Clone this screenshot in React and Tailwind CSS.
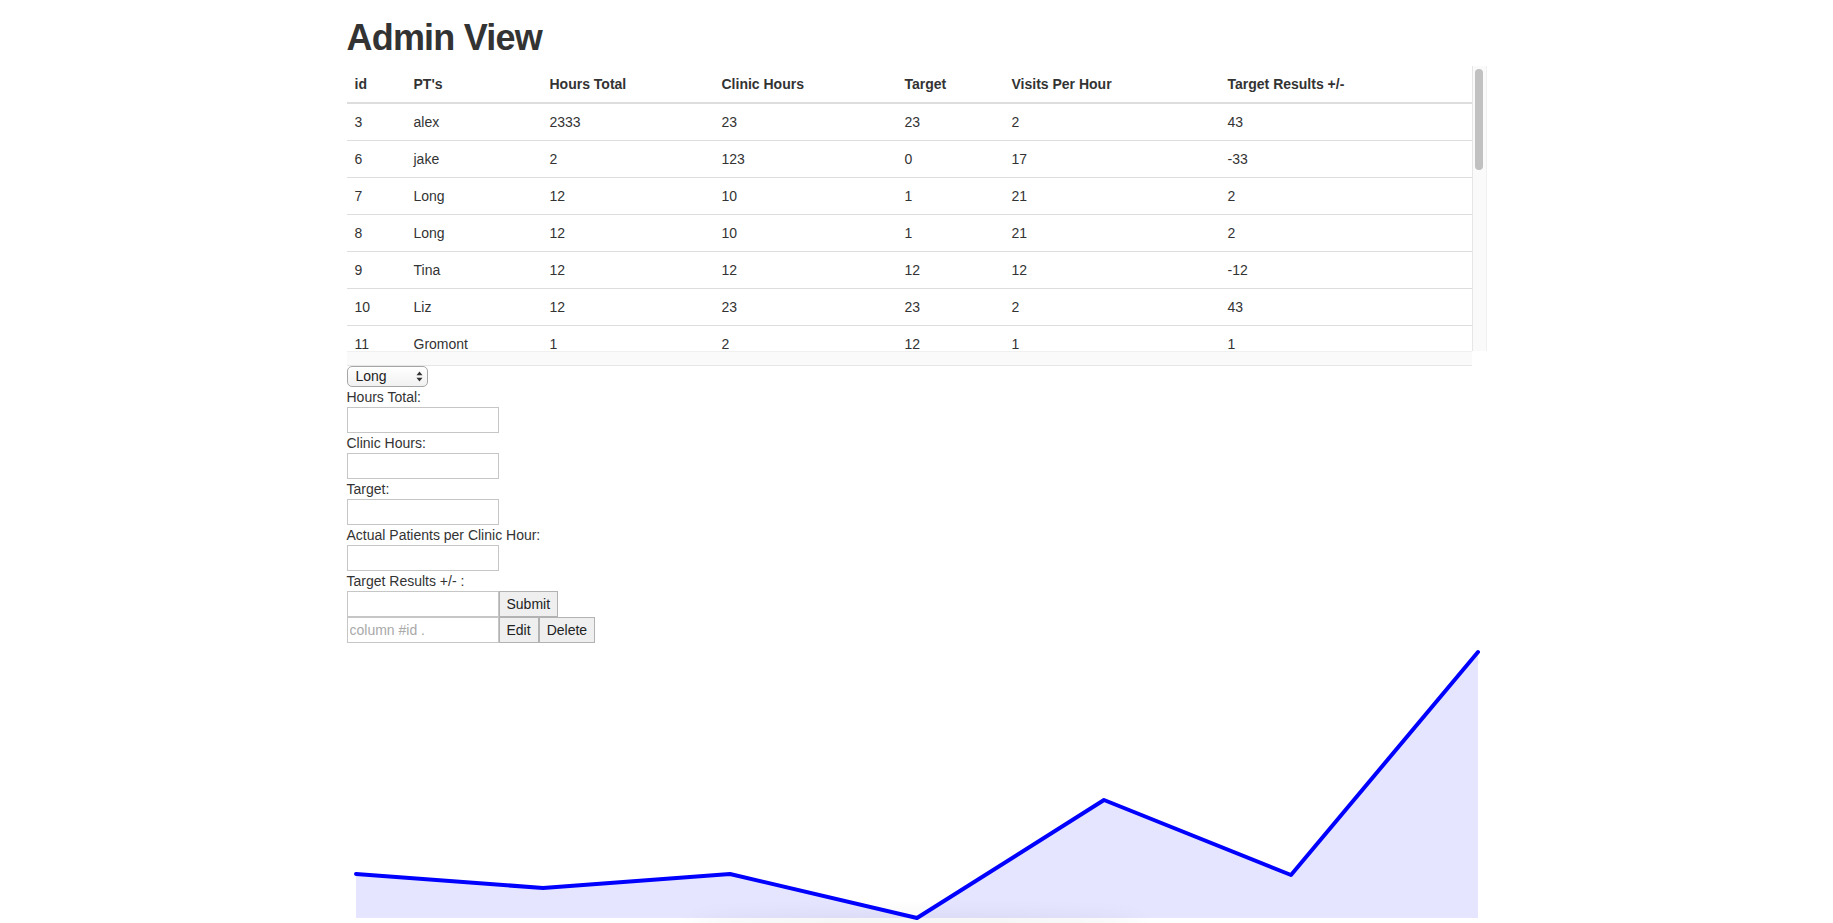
import React from "react";

const rows = [
  [3, "alex", 2333, 23, 23, 2, 43],
  [6, "jake", 2, 123, 0, 17, -33],
  [7, "Long", 12, 10, 1, 21, 2],
  [8, "Long", 12, 10, 1, 21, 2],
  [9, "Tina", 12, 12, 12, 12, -12],
  [10, "Liz", 12, 23, 23, 2, 43],
  [11, "Gromont", 1, 2, 12, 1, 1],
];

const headers = ["id", "PT's", "Hours Total", "Clinic Hours", "Target", "Visits Per Hour", "Target Results +/-"];
const colWidths = ["w-[59px]", "w-[136px]", "w-[172px]", "w-[183px]", "w-[107px]", "w-[216px]", "w-[252px]"];

const points = [
  [9, 231],
  [196, 245],
  [383, 231],
  [570, 275],
  [757, 157],
  [944, 232],
  [1131, 9],
];

const inputCls =
  "w-[152px] h-[26px] border border-[#c6c6c6] bg-white px-[2px] py-[2px] text-[14px] leading-[20px] text-[#333] outline-none placeholder:text-[#a9a9a9]";
const btnCls =
  "h-[26px] border border-[#b2b2b2] bg-[#efefef] px-[7px] text-[14px] leading-[20px] text-[#222]";

function Field({ label }) {
  return (
    <>
      <label className="block h-[20px]">{label}</label>
      <input type="text" className={inputCls} />
    </>
  );
}

function Chart() {
  const line = points.map((p) => p.join(",")).join(" ");
  const area = `9,275 ${line} 1131,275`;
  return (
    <svg width="1140" height="285" className="block" viewBox="0 0 1140 285">
      <defs>
        <filter id="blur" x="-50%" y="-200%" width="200%" height="500%">
          <feGaussianBlur stdDeviation="10" />
        </filter>
      </defs>
      <polygon points={area} fill="#0000ff" fillOpacity="0.1" />
      <ellipse cx="570" cy="280" rx="230" ry="7" fill="#000" opacity="0.07" filter="url(#blur)" />
      <polyline points={line} fill="none" stroke="#0000ff" strokeWidth="4" strokeLinejoin="round" strokeLinecap="round" />
    </svg>
  );
}

export default function App() {
  return (
    <div className="min-h-screen bg-white font-['Liberation_Sans',Arial,sans-serif] text-[14px] leading-[20px] text-[#333]">
      <div className="mx-auto w-[1140px]">
        <h1 className="mt-[18px] mb-[8px] text-[36px] leading-[40px] font-bold tracking-[-0.8px] text-[#333]">Admin View</h1>

        {/* Table scroll box, scrollbars drawn by hand */}
        <div className="flex h-[300px] w-[1140px] flex-col">
          <div className="flex h-[285px]">
            <div className="w-[1125px] overflow-hidden">
              <table className="w-full table-fixed">
                <colgroup>
                  {colWidths.map((w, i) => (
                    <col key={i} className={w} />
                  ))}
                </colgroup>
                <thead>
                  <tr>
                    {headers.map((h) => (
                      <th key={h} className="border-b-2 border-[#ddd] p-[8px] text-left align-bottom font-bold">
                        {h}
                      </th>
                    ))}
                  </tr>
                </thead>
                <tbody>
                  {rows.map((r) => (
                    <tr key={r[0]}>
                      {r.map((c, i) => (
                        <td key={i} className="border-t border-[#ddd] p-[8px] align-top">
                          {c}
                        </td>
                      ))}
                    </tr>
                  ))}
                </tbody>
              </table>
            </div>
            <div className="w-[15px] border-l border-r border-l-[#e6e6e6] border-r-[#f0f0f0] bg-[#fafafa] pt-[3px] pl-[2px]">
              <div className="h-[101px] w-[8px] rounded-full bg-[#c1c1c1]" />
            </div>
          </div>
          <div className="h-[15px] w-[1125px] border-t border-b border-t-[#f0f0f0] border-b-[#e6e6e6] bg-[#fafafa]" />
        </div>

        {/* Edit form */}
        <form className="flex flex-col items-start" onSubmit={(e) => e.preventDefault()}>
          <div className="relative h-[21px] w-[81px]">
            <select
              defaultValue="Long"
              className="h-[21px] w-[81px] appearance-none rounded-[5px] border border-[#a6a6a6] bg-linear-to-b from-white to-[#f1f1f1] pl-[8px] text-[14px] leading-[19px] text-[#222] outline-none"
            >
              <option>alex</option>
              <option>jake</option>
              <option>Long</option>
              <option>Tina</option>
              <option>Liz</option>
              <option>Gromont</option>
            </select>
            <svg className="pointer-events-none absolute right-[5px] top-[5px]" width="7" height="11" viewBox="0 0 7 11">
              <path d="M3.5 0.5 L6.5 4.2 L0.5 4.2 Z" fill="#333" />
              <path d="M3.5 10.5 L6.5 6.8 L0.5 6.8 Z" fill="#333" />
            </svg>
          </div>
          <Field label="Hours Total:" />
          <Field label="Clinic Hours:" />
          <Field label="Target:" />
          <Field label="Actual Patients per Clinic Hour:" />
          <label className="block h-[20px]">Target Results +/- :</label>
          <div className="flex">
            <input type="text" className={inputCls} />
            <button type="submit" className={btnCls}>Submit</button>
          </div>
          <div className="flex">
            <input type="text" placeholder="column #id ." className={inputCls} />
            <button type="button" className={btnCls}>Edit</button>
            <button type="button" className={btnCls}>Delete</button>
          </div>
        </form>

        <Chart />
      </div>
    </div>
  );
}
